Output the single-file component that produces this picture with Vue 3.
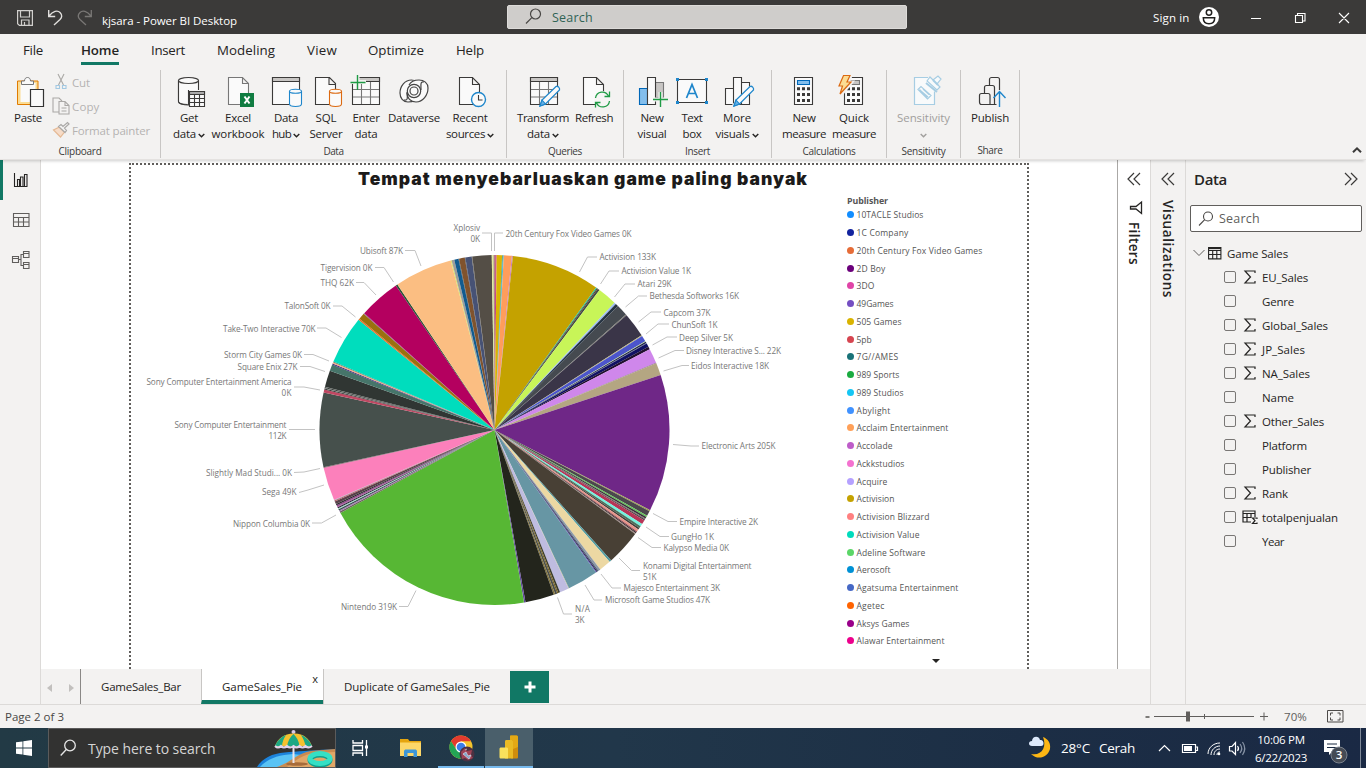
<script setup>
const SEGOE = "'Open Sans'"

// Tightens or loosens tracking so a label occupies the given length.
function fit(el, { value, modifiers }) {
  if (!value) return
  el.style.letterSpacing = '0px'
  const range = document.createRange()
  range.selectNodeContents(el)
  const box = range.getBoundingClientRect()
  const natural = modifiers.tall ? box.height : box.width
  const n = el.textContent.trim().length
  el.style.letterSpacing = (value - natural) / n + 'px'
}
const vFit = { mounted: fit, updated: fit }

const menus = [
  { t: 'File', x: 23, w: 20 },
  { t: 'Home', x: 81, w: 38, on: true },
  { t: 'Insert', x: 151, w: 34 },
  { t: 'Modeling', x: 217, w: 58 },
  { t: 'View', x: 307, w: 30 },
  { t: 'Optimize', x: 368, w: 56 },
  { t: 'Help', x: 456, w: 28 },
].map((m, i, a) => ({ ...m, gap: i ? m.x - a[i - 1].x - a[i - 1].w : m.x }))

const groups = [
  { name: 'Data', nw: 20, w: 346, pad: 4, items: [
    { i: 'db', w: 48, l: ['Get', 18, 'data', 23], c: 1 },
    { i: 'excel', w: 50, l: ['Excel', 26, 'workbook', 53] },
    { i: 'hub', w: 46, l: ['Data', 24, 'hub', 19], c: 1 },
    { i: 'sql', w: 34, l: ['SQL', 21, 'Server', 33] },
    { i: 'enter', w: 46, l: ['Enter', 27, 'data', 23] },
    { i: 'dv', w: 50, l: ['Dataverse', 52] },
    { i: 'recent', w: 62, l: ['Recent', 35, 'sources', 39], c: 1 },
  ] },
  { name: 'Queries', nw: 34, w: 117, pad: 5, items: [
    { i: 'transform', w: 62, l: ['Transform', 52, 'data', 23], c: 1 },
    { i: 'refresh', w: 40, l: ['Refresh', 38] },
  ] },
  { name: 'Insert', nw: 25, w: 148, pad: 6, items: [
    { i: 'visual', w: 44, l: ['New', 23, 'visual', 29] },
    { i: 'text', w: 36, l: ['Text', 21, 'box', 19] },
    { i: 'more', w: 54, l: ['More', 28, 'visuals', 34], c: 1 },
  ] },
  { name: 'Calculations', nw: 53, w: 115, pad: 7, items: [
    { i: 'calc', w: 50, l: ['New', 23, 'measure', 44] },
    { i: 'quick', w: 50, l: ['Quick', 30, 'measure', 44] },
  ] },
  { name: 'Sensitivity', nw: 44, w: 74, pad: 0, items: [
    { i: 'sens', w: 73, l: ['Sensitivity', 53], c: 2, off: true },
  ] },
  { name: 'Share', nw: 25, w: 59, pad: 0, items: [
    { i: 'publish', w: 58, l: ['Publish', 38] },
  ] },
]

const legend = [
  ['10TACLE Studios', '#118dff', 67], ['1C Company', '#12239e', 52], ['20th Century Fox Video Games', '#e66c37', 126],
  ['2D Boy', '#6b007b', 29], ['3DO', '#e044a7', 18], ['49Games', '#744ec2', 37], ['505 Games', '#d9b300', 45],
  ['5pb', '#d64550', 15], ['7G//AMES', '#197278', 42], ['989 Sports', '#1aab40', 43], ['989 Studios', '#15c6f4', 47],
  ['Abylight', '#4092ff', 34], ['Acclaim Entertainment', '#ffa058', 92], ['Accolade', '#be5dc9', 36],
  ['Ackkstudios', '#f472d0', 48], ['Acquire', '#b5a1ff', 31], ['Activision', '#c4a200', 38],
  ['Activision Blizzard', '#ff8080', 73], ['Activision Value', '#00dbbc', 63], ['Adeline Software', '#5bd667', 69],
  ['Aerosoft', '#0091d5', 34], ['Agatsuma Entertainment', '#4668c5', 102], ['Agetec', '#ff6300', 28],
  ['Aksys Games', '#99008a', 53], ['Alawar Entertainment', '#ec008c', 88],
]

const CX = 494.5, CY = 430, R = 175
// [end angle clockwise from 12 o'clock, colour]
const stops = [
  [0.25, '#8a5a34'], [0.7, '#c23f86'], [2.5, '#dab400'], [2.75, '#4c8c58'], [3.05, '#35b8e0'], [5.7, '#ff9d5b'], [6.05, '#c67cb8'],
  [35.5, '#c4a200'], [35.85, '#20c38f'], [36.2, '#57362b'], [36.9, '#434a45'], [43.3, '#c8f558'], [43.9, '#9dbcf0'], [44.9, '#273443'],
  [48.7, '#454a50'], [49, '#77756d'], [57.2, '#3a3548'], [57.5, '#bdb875'], [59.5, '#4c55cb'], [59.75, '#c1ec83'],
  [60.2, '#20204e'], [60.4, '#5a6a81'], [61.6, '#101063'], [62.5, '#21102f'], [67.4, '#cf87eb'], [67.6, '#7a5c78'], [71.7, '#b4a682'],
  [117.25, '#6f2787'], [117.65, '#9ba34e'], [119.3, '#4c474d'], [119.8, '#60c755'], [120.4, '#39333a'], [120.7, '#756964'], [121.1, '#514147'],
  [122.5, '#b63557'], [123.4, '#72f3df'], [124.1, '#4d705b'], [124.7, '#403e39'], [125.5, '#e7958a'], [125.8, '#7a3040'],
  [126.2, '#3c3032'], [126.5, '#9b837e'], [138.2, '#484035'], [138.9, '#529ca1'], [142.8, '#ecd8a3'], [143.5, '#8d99a5'],
  [144, '#53617e'], [144.3, '#18132f'], [144.55, '#503ab5'], [154.8, '#6796a4'], [155, '#a9b48c'], [158, '#bfbce0'],
  [158.6, '#3b3d30'], [159, '#796018'], [159.7, '#4c4f49'], [160.2, '#82733a'], [169.8, '#23251c'], [170.3, '#61489b'],
  [241.7, '#57b734'], [242.2, '#6b6458'], [242.6, '#a579b5'], [243.1, '#394e4b'], [243.4, '#a3d9ca'], [243.8, '#20202e'],
  [244.1, '#a45e96'], [244.5, '#8f3e87'], [245, '#2d292f'], [245.9, '#574149'], [246.2, '#b85c67'], [246.45, '#86a7b4'],
  [257.5, '#fc80bb'], [257.7, '#97596f'], [282.4, '#46504c'], [283.4, '#bf4862'], [283.7, '#303534'], [283.9, '#8b8d87'],
  [284.2, '#303633'], [284.35, '#778076'], [289.8, '#303633'], [292, '#46756a'], [292.35, '#3f2382'], [292.8, '#efaf82'], [293, '#477d69'],
  [309, '#00ddbd'], [309.5, '#f06a20'], [311.6, '#9b700e'], [311.9, '#80568e'], [325.7, '#b4005f'], [326.3, '#295237'],
  [345.5, '#fbbe82'], [345.8, '#dbe35c'], [346.7, '#9d9d9a'], [348.1, '#115b8f'], [348.3, '#304c5a'], [350.2, '#80532d'], [350.4, '#424857'], [352.5, '#475275'],
  [352.7, '#625e54'], [359.1, '#544e46'], [359.45, '#e3ea91'], [359.75, '#bfd790'], [360, '#ad556f'],
]
const pt = (a, r = R) => {
  const t = (a * Math.PI) / 180
  return `${(CX + r * Math.sin(t)).toFixed(2)} ${(CY - r * Math.cos(t)).toFixed(2)}`
}
const slices = stops.map(([end, fill], i) => {
  const start = i ? stops[i - 1][0] : 0
  return { fill, d: `M${CX} ${CY}L${pt(start)}A${R} ${R} 0 0 1 ${pt(end)}Z` }
})

// text, left x, vertical centre, width
const labels = [
  ['Xplosiv', 453.5, 228, 26.5], ['0K', 470.5, 239, 9.5], ['20th Century Fox Video Games 0K', 505.5, 234, 126],
  ['Activision 133K', 599.5, 257, 56.5], ['Activision Value 1K', 621.5, 271, 69.5], ['Atari 29K', 637.5, 284, 34],
  ['Bethesda Softworks 16K', 649.5, 296, 89.5], ['Capcom 37K', 663.5, 313, 47], ['ChunSoft 1K', 671.5, 325, 46],
  ['Deep Silver 5K', 679, 338, 54], ['Disney Interactive S... 22K', 686, 351, 95], ['Eidos Interactive 18K', 691, 366, 78],
  ['Electronic Arts 205K', 701.5, 446, 74], ['Empire Interactive 2K', 679.5, 522, 78.5], ['GungHo 1K', 671, 537, 43],
  ['Kalypso Media 0K', 663.5, 548, 65.5], ['Konami Digital Entertainment', 643, 566, 108.5], ['51K', 643, 577, 13.5],
  ['Majesco Entertainment 3K', 623.5, 588, 96.5], ['Microsoft Game Studios 47K', 605, 600, 105], ['N/A', 575, 609, 15],
  ['3K', 575, 620, 9.5], ['Nintendo 319K', 341, 607, 56], ['Nippon Columbia 0K', 233, 524, 77], ['Sega 49K', 262, 492, 34.5],
  ['Slightly Mad Studi... 0K', 206, 473, 86], ['Sony Computer Entertainment', 174.5, 425, 112], ['112K', 268.5, 436, 18],
  ['Sony Computer Entertainment America', 146.5, 382, 145], ['0K', 281.5, 393, 10], ['Square Enix 27K', 237.5, 367, 60],
  ['Storm City Games 0K', 224, 355, 78], ['Take-Two Interactive 70K', 223, 329, 92.5], ['TalonSoft 0K', 284.5, 306, 46],
  ['THQ 62K', 320.5, 283, 33.5], ['Tigervision 0K', 320.5, 268, 52], ['Ubisoft 87K', 360, 251, 43],
]
const leaders = [
  '482,233 491.5,233 491.5,251', '503,233 494.5,233 494.5,251', '597,257 587.5,257 579.5,272', '619,271 609,271 600.5,284',
  '635,284 625,284 614.5,297', '647,296 638.5,296 625.5,307', '661,312 651,312 638.5,322', '669,324 658,324 646,334',
  '677,337 667,337 652.5,345', '684,350.5 675,350.5 658.5,358', '689,365.5 682,365.5 663.5,371', '699,446 691,446 673,444.5',
  '677,521.5 668,521.5 653,513.5', '669,536.5 660,536.5 646,527', '661,547.5 652,547.5 638,537.5', '640,570.5 631.5,570.5 619,558',
  '621,588 612,588 601,574', '602,600 594,600 585,585', '572,614 563.5,614 557.5,597.5', '399,606.5 408,606.5 416,590.5',
  '312,523 321.5,523 336,515', '299,492.5 308,490 324,485', '294,472.5 304,472 320,468.5', '289,429.5 299,429.5 315,429.5',
  '294,387 304,387 320,390', '300,366.5 310,366.5 325,371.5', '304,354.5 313,354.5 329,361', '317,328 326,328 341.5,337.5',
  '333,306 342,306 355.5,317', '356,282.5 364,282.5 376,295', '375,267.5 384,267.5 393.5,282', '405,250.5 415,250.5 421,266',
]

const fields = [
  ['EU_Sales', 46, 's'], ['Genre', 32], ['Global_Sales', 66, 's'], ['JP_Sales', 43, 's'], ['NA_Sales', 48, 's'], ['Name', 32],
  ['Other_Sales', 62, 's'], ['Platform', 45], ['Publisher', 49], ['Rank', 26, 's'], ['totalpenjualan', 76, 't'], ['Year', 22],
]
</script>

<template>
  <div class="app">
    <header class="titlebar">
      <svg class="tb-icons" width="102" height="34" fill="none" stroke="#d2d0ce" stroke-width="1.2">
        <path d="M17.6 10.6h14.8v14.8H19.4l-1.8-1.6zM20.5 11v6h9v-6M21.5 25v-5h7.500v5M24.500 22v3" />
        <path stroke="#e1dfdd" stroke-width="1.4" d="M48.700 10v6.500h6.500M49 16c4-5 8.500-6 11-3.500s2 5-0 7L54 25" />
        <path stroke="#797775" stroke-width="1.3" d="M91.300 10v6.500h-6.500M91 16c-4-5-8.500-6-11-3.500s-2 5 0 7L86 25" />
      </svg>
      <span class="doc" v-fit="135">kjsara - Power BI Desktop</span>
      <div class="topsearch">
        <svg width="18" height="18" fill="none" stroke="#484644" stroke-width="1.2"><circle cx="11.500" cy="6" r="5" /><path d="M7.800 9.700L2 15.500" /></svg>
        <span v-fit="41">Search</span>
      </div>
      <div class="account">
        <span v-fit="36.500">Sign in</span>
        <svg width="20" height="20"><circle cx="10" cy="10" r="10" fill="#fff" /><g fill="none" stroke="#201f1e" stroke-width="1.500"><circle cx="10" cy="5.500" r="2.700" /><path d="M4.300 10.700h11.400c0 3.800-2 6-5.700 6s-5.700-2.200-5.700-6z" /></g></svg>
      </div>
      <svg class="winbtns" width="130" height="34" fill="none" stroke="#fff" stroke-width="1.100">
        <path d="M15 18.500h10M59.500 15.500h7v7h-7zM61.500 15.500v-2h7.500v7.500h-2.500M103 13l10 10M113 13l-10 10" />
      </svg>
    </header>

    <nav class="menu">
      <div v-for="m in menus" :key="m.t" class="menu-item" :class="{ on: m.on }" :style="{ width: m.w + 'px', marginLeft: m.gap + 'px' }">
        <span v-fit="m.w">{{ m.t }}</span>
      </div>
    </nav>

    <section class="ribbon">
      <div class="group clip">
        <div class="group-body">
          <div class="btn paste">
            <svg class="ico" width="40" height="36" fill="none">
              <path d="M9.500 9H30v23.500H9.500z" fill="#fbdc93" stroke="#e07b00" /><path d="M12.500 11h15v19h-15z" fill="#fafafa" />
              <path d="M13.500 12.500V9h3c0-2 1-3.500 3-3.500s3 1.500 3 3.500h3v3.500z" fill="#fafafa" stroke="#777" />
              <path d="M22.500 17.500h13v17h-13z" fill="#fafafa" stroke="#333" stroke-width="1.200" />
            </svg>
            <span v-fit="28">Paste</span>
          </div>
          <ul class="clip-list">
            <li><svg width="18" height="18" fill="none" stroke="#aaa8a6" stroke-width="1.100"><path d="M6 1l5.500 11M12 1L6.500 12" /><path stroke="#a3c9e2" d="M4 12.500h3.500v3H4zM10.500 12.500H14v3h-3.500z" /></svg><span v-fit="18">Cut</span></li>
            <li><svg width="18" height="18" fill="none" stroke="#aaa8a6" stroke-width="1.100"><path d="M7 15H1V1h6l3 3M7 4.500h6l4 4V17H7zM13 4.500v4h4M9.500 11h5M9.500 14h5" /></svg><span v-fit="27.500">Copy</span></li>
            <li><svg width="18" height="18" fill="none" stroke="#aaa8a6" stroke-width="1.200"><path stroke="#e5b994" fill="#f6dcc8" d="M7.500 6L1.500 9 8.500 16l4-5z" /><path fill="#f3f2f1" d="M6.500 5.500l6.500 6 1.500-2-2-2.500L17 3l-1.500-1.500-4.500 4-2-2z" /></svg><span v-fit="78">Format painter</span></li>
          </ul>
        </div>
        <div class="group-name"><span v-fit="43">Clipboard</span></div>
      </div>

      <div v-for="g in groups" :key="g.name" class="group" :style="{ width: g.w + 'px' }">
        <div class="group-body" :style="{ paddingLeft: g.pad + 'px' }">
          <div v-for="b in g.items" :key="b.i" class="btn" :class="{ off: b.off }" :style="{ width: b.w + 'px' }">
            <svg class="ico" width="40" height="36" fill="none" stroke="#3b3a39" stroke-width="1.100">
              <template v-if="b.i === 'db'">
                <path fill="#fafafa" d="M9.500 8.500v21c0 2 4.500 3.500 10 3.500V12" /><path fill="#fafafa" stroke="none" d="M10 9h19v9H18v15l-8-3z" />
                <path d="M29.500 18V8.500M9.500 8.500v21c0 1.500 3 3 9 3" /><ellipse cx="19.500" cy="8.500" rx="10" ry="3" fill="#fafafa" />
                <path fill="#fafafa" d="M20.500 19.500h15v15h-15z" /><path fill="#aaa" d="M20.500 19.500h15v3h-15z" /><path d="M20.500 26.500h15M20.500 30.500h15M25.500 22.500v12M30.500 22.500v12" />
              </template>
              <template v-else-if="b.i === 'excel'">
                <path stroke="#777" fill="#fafafa" d="M10.500 5.500h14l6 6v21h-20zM24.500 5.500v6h6" /><path stroke="none" fill="#107c41" d="M22 21h14v14H22z" />
                <path stroke="#fff" stroke-width="2" d="M26.500 24.500l5 7M31.500 24.500l-5 7" />
              </template>
              <template v-else-if="b.i === 'hub'">
                <path fill="#fafafa" d="M6.500 5.500h27v27h-27z" /><path fill="#c8c6c4" d="M6.500 5.500h27v4h-27z" />
                <path stroke="#fafafa" stroke-width="4" d="M23 20v12" /><path stroke="#1e86cb" fill="#fafafa" d="M23.500 19v13c0 1.500 3 2.500 6 2.500s6-1 6-2.500V19" /><ellipse cx="29.500" cy="19.300" rx="6" ry="2" fill="#fafafa" stroke="#1e86cb" />
              </template>
              <template v-else-if="b.i === 'sql'">
                <path fill="#fafafa" d="M9.500 5.500h14l6 6v21h-20zM23 5.500v7h7" /><path stroke="#dc6a12" fill="#fafafa" d="M23.500 19v13c0 1.500 3 2.500 6 2.500s6-1 6-2.500V19" /><ellipse cx="29.500" cy="19.300" rx="6" ry="2" fill="#fafafa" stroke="#dc6a12" />
              </template>
              <template v-else-if="b.i === 'enter'">
                <path fill="#fafafa" d="M6.500 10v22.500h27v-27H12" /><path fill="#c8c6c4" d="M12 5.500h21.500v4H12z" /><path stroke="#777" d="M7 17.500h26M7 25h26M15.500 10v22M24.500 10v22" />
                <path stroke="#f3f2f1" stroke-width="4" d="M11.500 3v14M4 10h16" /><path stroke="#1f9b45" stroke-width="1.400" d="M11.500 3v15M4.500 10.500h15" />
              </template>
              <template v-else-if="b.i === 'dv'">
                <g stroke="#444" stroke-width="1.200">
                  <path fill="#fafafa" d="M25 24c-2 4-6 6-11 6-5 0-8-4-8-9C6 14 11 8 17.500 8c6 0 9.500 4 9.500 9" />
                  <path fill="#fafafa" d="M15 13c2-4 5-5 10-5 5 0 9 3 9 8 0 7-5 14-12 14-5.500 0-9-4-9-9" />
                  <circle cx="20" cy="19" r="6.700" fill="#fafafa" /><circle cx="20" cy="19" r="4" />
                  <path d="M10 28c5 1 3-4 3-8M30 10c-4-1-3 3-3 8" />
                </g>
              </template>
              <template v-else-if="b.i === 'recent'">
                <path fill="#fafafa" d="M9.500 5.500h13l7 7v20h-20zM22.500 5.500v7h7" /><circle cx="28.500" cy="27.500" r="7" fill="#fafafa" stroke="#1e86cb" stroke-width="1.400" /><path d="M28.500 23v5h4" />
              </template>
              <template v-else-if="b.i === 'transform'">
                <path fill="#fafafa" d="M7.500 5.500h27v27h-27z" /><path fill="#c8c6c4" d="M7.500 5.500h27v4h-27z" /><path stroke="#777" d="M8 17.500h26M8 25h26M16.500 10v22M25.500 10v22" />
                <path fill="#fafafa" stroke="#1e86cb" stroke-width="1.300" d="M17 34l2-6L33 14.500c2-1 4 1.500 3.500 3.500L22.500 32z" /><path fill="#66afe3" stroke="#1e86cb" d="M17 34l2-6 3.500 4z" />
              </template>
              <template v-else-if="b.i === 'refresh'">
                <path fill="#fafafa" d="M9.500 5.500h13l7 7v20h-20zM22.500 5.500v7h7" /><circle cx="28.500" cy="27.500" r="8.500" fill="#f6f5f4" stroke="none" />
                <path stroke="#1f9b45" stroke-width="1.300" d="M21.500 26c1-7 10-8 13-2M35.500 19.500V24.500h-5M35.500 29c-1 7-10 8-13 2M21.500 35.500v-5h5" />
              </template>
              <template v-else-if="b.i === 'visual'">
                <path fill="#83beec" stroke="#0067b8" d="M7.500 16.500h8v16h-8z" /><path fill="#c8c6c4" stroke="#777" d="M23.500 10.500h8v15h-8z" /><path fill="#fafafa" d="M15.500 5.500h8v27h-8z" />
                <path stroke="#f3f2f1" stroke-width="4" d="M28.500 20v14M21 27.500h15" /><path stroke="#1f9b45" stroke-width="1.400" d="M28.500 20v15M21 27.500h15" />
              </template>
              <template v-else-if="b.i === 'text'">
                <path fill="#fafafa" d="M5.500 7.500h29v23h-29z" /><path stroke="none" fill="#1e86cb" d="M4 6h3v3H4zM33 6h3v3h-3zM4 29h3v3H4zM33 29h3v3h-3z" /><path stroke="#1e86cb" stroke-width="1.700" d="M14.500 26L20 12.500 25.500 26M16.500 21.500h7" />
              </template>
              <template v-else-if="b.i === 'more'">
                <path fill="#fafafa" d="M8.500 16.500h8v16h-8zM24.500 10.500h8v22h-8zM16.500 5.500h8v27h-8z" /><path stroke="#f3f2f1" stroke-width="3" d="M16 34L36 13" />
                <path fill="#fafafa" stroke="#1e86cb" stroke-width="1.300" d="M17 34l2-6L33 14.500c2-1 4 1.500 3.500 3.500L22.500 32z" /><path fill="#66afe3" stroke="#1e86cb" d="M17 34l2-6 3.500 4z" />
              </template>
              <template v-else-if="b.i === 'calc'">
                <path fill="#fafafa" d="M10.500 5.500h18v27h-18z" /><path fill="#83beec" stroke="#0067b8" d="M13.500 8.500h12v4h-12z" /><path stroke-width="3" stroke-dasharray="3 2" d="M13 16.800h13M13 22.600h13M13 28.400h13" />
              </template>
              <template v-else-if="b.i === 'quick'">
                <path fill="#fafafa" d="M10.500 5.500h18v27h-18z" /><path fill="#c8c6c4" stroke="#777" d="M15 8.500h10.500v4H14z" /><path stroke-width="3" stroke-dasharray="3 2" d="M13 16.800h13M13 22.600h13M13 28.400h13" />
                <path stroke="#f3f2f1" stroke-width="3" fill="#f3f2f1" d="M9 4h8l-3 6h4L7 23l2-8H5z" /><path stroke="#dc6a12" fill="#fbdc93" stroke-width="1.200" d="M9.500 3.500H16L13 10h4L6 22l2.500-8H5z" />
              </template>
              <template v-else-if="b.i === 'sens'">
                <g stroke="#a6cde3" stroke-width="1.200"><path fill="#f8fafb" d="M24 5.500H10.500v27h20v-13" /><path fill="#f8fafb" d="M14 17.500l3-3 10 9-3.500 3.500z M17 19l7 6M19 17l6 5.500M15.500 17.500l8 8" /><path fill="#f8fafb" d="M23 9l3-4 3 3 5-4 3 3-4 5 3 3-3 3z" /><path stroke-width="2" d="M22 11l11 9M29 8l5 5" /></g>
              </template>
              <template v-else>
                <path stroke-width="1.200" d="M9.500 30v-6.500c0-1 1-2 2-2h6.500c1 0 2 1 2 2v9h-8.500c-1 0-2-1-2-2.500zM14.500 21.500v-6c0-1 1-2 2-2h6c1 0 2 1 2 2v17H20M19.500 13.500v-6c0-1 1-2 2-2h6c1 0 2 1 2 2V18M24.500 32.500h2" />
                <path stroke="#1e86cb" stroke-width="1.400" d="M29.500 35V20M23.500 26l6-6.500 6 6.500" />
              </template>
            </svg>
            <span v-fit="b.l[1]">{{ b.l[0] }}</span>
            <span v-if="b.l[2]" class="row2"><i v-fit="b.l[3]">{{ b.l[2] }}</i><svg v-if="b.c" width="7" height="5" fill="none" stroke="currentColor" stroke-width="1.400"><path d="M.7.900L3.500 3.700 6.300.900" /></svg></span>
            <span v-else-if="b.c" class="row2"><svg width="7" height="5" fill="none" stroke="currentColor" stroke-width="1.400"><path d="M.7.900L3.500 3.700 6.300.900" /></svg></span>
          </div>
        </div>
        <div class="group-name"><span v-fit="g.nw">{{ g.name }}</span></div>
      </div>
      <svg class="collapse" width="10" height="6" fill="none" stroke="#3b3a39" stroke-width="2"><path d="M1 5.300l4-4 4 4" /></svg>
    </section>

    <main class="work">
      <aside class="rail">
        <div class="rail-item on"><svg width="20" height="20" fill="none" stroke="#252423" stroke-width="1.100"><path d="M3.500 3v13.500h13M6.500 16V9.500h2V16M9.500 16V7h2.500v9M13.500 16V4.500H16V16" /></svg></div>
        <div class="rail-item"><svg width="20" height="20" fill="none" stroke="#605e5c" stroke-width="1.100"><path d="M2.500 3.500h15.500v13H2.500zM2.500 7.500H18M2.500 12H18M7.500 7.500v9M12.500 7.500v9" /></svg></div>
        <div class="rail-item"><svg width="20" height="20" fill="none" stroke="#605e5c" stroke-width="1.100"><path d="M1.500 6.500h6v6h-6zM1.500 8.500h6M12.500 1.500H18v6h-5.500zM12.500 3.500H18M12.500 12.500H18v6h-5.500zM12.500 14.500H18M7.500 9.500H10M12.500 4.500H10v11h2.500" /></svg></div>
      </aside>

      <div class="center">
        <div class="stage">
          <div class="canvas">
            <div class="page">
              <h1 v-fit="450">Tempat menyebarluaskan game paling banyak</h1>
              <div class="visual">
                <svg class="pie" width="700" height="478" viewBox="132 191 700 478">
                  <path v-for="(s, i) in slices" :key="i" :d="s.d" :fill="s.fill" />
                  <polyline v-for="(l, i) in leaders" :key="'l' + i" :points="l" fill="none" stroke="#c3c3c3" />
                  <text v-for="(l, i) in labels" :key="'t' + i" :x="l[1]" :y="l[2] + 3.300" :textLength="l[3]" fill="#777" font-size="8.200" :font-family="SEGOE">{{ l[0] }}</text>
                </svg>
                <div class="legend">
                  <b v-fit="41">Publisher</b>
                  <ul>
                    <li v-for="l in legend" :key="l[0]"><i :style="{ background: l[1] }"></i><span v-fit="l[2]">{{ l[0] }}</span></li>
                  </ul>
                  <svg class="more" width="8" height="4"><path d="M0 0h8L4 4z" fill="#252423" /></svg>
                </div>
              </div>
            </div>
          </div>
          <aside class="filters">
            <svg width="14" height="14" fill="none" stroke="#3b3a39" stroke-width="1.200"><path d="M7 1L1 7l6 6M13 1L7 7l6 6" /></svg>
            <svg class="funnel" width="14" height="14" fill="none" stroke="#252423" stroke-width="1.300"><path d="M12.500 1v11.500L7 8H1.500V5.500H7z" /></svg>
            <span class="vert" v-fit.tall="43">Filters</span>
          </aside>
        </div>
        <div class="tabs">
          <div class="arrows"><svg width="5" height="8"><path d="M5 0v8L0 4z" fill="#c2c0be" /></svg><svg width="5" height="8"><path d="M0 0v8l5-4z" fill="#c2c0be" /></svg></div>
          <div class="tab t1"><span v-fit="80">GameSales_Bar</span></div>
          <div class="tab t2"><span v-fit="80">GameSales_Pie</span><em>x</em></div>
          <div class="tab t3"><span v-fit="146">Duplicate of GameSales_Pie</span></div>
          <div class="add"><svg width="12" height="12"><path d="M6 .500v11M.500 6h11" stroke="#fff" stroke-width="3" /></svg></div>
        </div>
      </div>

      <aside class="vis">
        <svg width="14" height="14" fill="none" stroke="#3b3a39" stroke-width="1.200"><path d="M7 1L1 7l6 6M13 1L7 7l6 6" /></svg>
        <span class="vert" v-fit.tall="98">Visualizations</span>
      </aside>

      <aside class="data">
        <div class="data-head"><strong v-fit="33">Data</strong><svg width="14" height="14" fill="none" stroke="#3b3a39" stroke-width="1.200"><path d="M1 1l6 6-6 6M7 1l6 6-6 6" /></svg></div>
        <div class="data-search"><svg width="16" height="16" fill="none" stroke="#484644" stroke-width="1.100"><circle cx="10" cy="5.500" r="4.500" /><path d="M6.700 8.700L1 14.500" /></svg><span v-fit="41">Search</span></div>
        <div class="tree">
          <div class="table-row">
            <svg width="12" height="8" fill="none" stroke="#605e5c"><path d="M.5 1L6 6.500 11.500 1" /></svg>
            <svg width="14" height="13" fill="none" stroke="#252423" stroke-width="1.100"><path d="M.6.600h12.300v11.300H.6zM.6 3.500h12.300M.6 7.500h12.300M4.700 3v9M8.800 3v9" /><path d="M.6 1.300h12.300" stroke-width="1.600" /></svg>
            <span v-fit="61">Game Sales</span>
          </div>
          <div v-for="f in fields" :key="f[0]" class="field">
            <i class="check"></i>
            <svg width="16" height="14" fill="none" stroke="#252423" stroke-width="1.200">
              <path v-if="f[2] === 's'" d="M13 3V1H3l5.500 6L3 13h10v-2" />
              <template v-if="f[2] === 't'"><path d="M9 12H1V1h12v6M1 3.500h12M5 3.500V12M1 7.500h8M9 3.500V8" /><path d="M15 9V8h-4.500l2.500 2.700-2.500 2.800H15v-1" /></template>
            </svg>
            <span v-fit="f[1]">{{ f[0] }}</span>
          </div>
        </div>
      </aside>
    </main>

    <footer class="status">
      <span v-fit="59">Page 2 of 3</span>
      <svg width="200" height="22" fill="none" stroke="#605e5c"><path d="M.500 11h4" stroke-width="1.600" /><path d="M9 10.500h100M59.500 8v5M115 10.500h8M119 6.500v8" /><path d="M43 5.500v10" stroke-width="4" /></svg>
      <span class="pct" v-fit="23">70%</span>
      <svg class="fitpage" width="17" height="13" fill="none" stroke="#4c4a48"><path d="M.5.500h15.500v11.500H.5z" /><path d="M6 3H3.500v2.500M10.500 3H13v2.500M3.500 7.500V10H6M13 7.500V10h-2.500" /></svg>
    </footer>

    <div class="taskbar">
      <div class="start"><svg width="16" height="16" fill="#fff"><path d="M0 2.300L6.500 1.400v6.200H0zM7.300 1.300L16 0v7.600H7.300zM0 8.400h6.500v6.200L0 13.700zM7.300 8.400H16V16l-8.700-1.300z" /></svg></div>
      <div class="tsearch">
        <svg width="17" height="18" fill="none" stroke="#e6e6e6" stroke-width="1.300"><circle cx="10" cy="6.500" r="5.300" /><path d="M6.300 10.500L.7 16.500" /></svg>
        <span v-fit="127.500">Type here to search</span>
        <svg class="beach" width="78" height="38">
          <path d="M0 38C7 27 18 24 32 23S60 21 78 20v18z" fill="#1c83db" /><path d="M3 38c8-9 19-12 33-13l9 1-12 12z" fill="#5ac3f4" />
          <path d="M20 38c15-5 18-13 34-16l24-2v18z" fill="#c98b50" /><path d="M30 38c8-5 12-11 26-14l22-1v15z" fill="#e0a768" />
          <ellipse cx="40" cy="35" rx="11" ry="1.800" fill="#a76c3b" />
          <path d="M36.500 5v29" stroke="#e9e4ed" stroke-width="2" /><circle cx="36.500" cy="3" r="2" fill="#d9c9e6" />
          <path d="M18 17C21 9 27 5 36.500 4.500S52 9 55 17l-5 1-4-1-6 1-4-1-6 1-4-1-5 1z" fill="#f5c12e" />
          <path d="M18 17C20 12 24 8 29 6c-2 3-4 7-4 11.500zM30 17c1-5 3-9 6.500-12 3 3 5.500 7 6 12l-6 .5zM55 17C53 12 49 8 44 6c2 3 4 7 4.500 11.500z" fill="#1da884" />
          <path d="M18 17q3 3 6 0 3 3 6 0 3 3 6.500 0 3 3 6 0 3 3 6 0 3 3 6.500 0" stroke="#e2d4ed" stroke-width="2" fill="none" />
          <ellipse cx="63" cy="31" rx="10" ry="5" fill="none" stroke="#109f8d" stroke-width="5" /><ellipse cx="63" cy="29.500" rx="10" ry="5" fill="none" stroke="#35e0c4" stroke-width="5" />
        </svg>
      </div>
      <div class="titem"><svg width="18" height="18" fill="none" stroke="#fff" stroke-width="1.300"><path d="M2 1v3h9.500V1M2 17v-3h9.500v3M2 6.500h9.500v5H2zM15.500 1v16" /><path d="M14 6.500h3v3h-3z" fill="#fff" stroke="none" /></svg></div>
      <div class="titem w54"><svg width="23" height="20"><path d="M1 1h8l1.500 2H22v15H1z" fill="#e5a50f" /><path d="M1 4.500h21V18H1z" fill="#fcd769" /><path d="M5 19v-5.500c0-1.500 1-2 2-2h9c1 0 2 .5 2 2V19h-3.500v-4h-6v4z" fill="#3d96d8" /></svg></div>
      <div class="titem run">
        <svg width="25" height="25" viewBox="0 0 25 25"><circle cx="12" cy="12" r="11.500" fill="#f4c42d" /><path d="M2 6.200A11.500 11.500 0 0 1 22 6.300H12L7 14z" fill="#e33b2e" /><path d="M2 6.200A11.500 11.500 0 0 0 12 23.500l4.500-9L7 14z" fill="#23a455" /><circle cx="12" cy="12" r="5.500" fill="#fff" /><circle cx="12" cy="12" r="4.300" fill="#3b7de9" /><circle cx="18" cy="19" r="7.500" fill="#4b3142" /><path d="M12 17l4-4 2 3 5-1-1 5 2 3-5 2-3-2-3 1z" fill="#a04355" /><path d="M14 19l3-2 2 4 3-1-2 4zM16 15l2-1" fill="#82a6c9" stroke="#cfd0e2" stroke-width=".8" /></svg>
      </div>
      <div class="titem run active"><svg width="20" height="26"><path d="M12 1.500h5.500c1 0 1.500.5 1.500 1.500v20c0 1-.5 1.500-1.500 1.500H12z" fill="#cf8d0c" /><path d="M6 7.500c0-1 .5-1.500 1.500-1.500h5c1 0 1.500.5 1.500 1.500V24.500H6z" fill="#eabb24" /><path d="M11 1.500h6c1 0 2 .5 2 1.500v10l-5 2V7c0-.5-.5-1-1-1h-2z" fill="#e4a915" /><path d="M.5 15c0-1 .5-1.500 1.500-1.500h5.500c1 0 1.500.5 1.500 1.500v9.500H2c-1 0-1.500-.5-1.500-1.500z" fill="#fae15c" /></svg></div>
      <div class="tray">
        <svg width="24" height="24"><path d="M15 1c5 2 8 6 7 12-2 8-12 12-19 5 11 2 16-7 12-17z" fill="#fdb714" /><path d="M4 10C0 10 0 5 4 5c0-5 7-6 8-1 4-1 5 6 1 6z" fill="#dce9fb" /></svg>
        <span class="temp" v-fit="29">28°C</span><span class="wx" v-fit="36">Cerah</span>
        <svg class="sys" width="90" height="22" fill="none" stroke="#fff" stroke-width="1.200">
          <path d="M1 14l5.500-5.500L12 14" /><path d="M24.500 7.500h13v8h-13zM38 10h1.500v3.500H38" /><path fill="#fff" stroke="none" d="M26 9h8v5h-8z" />
          <path d="M50 17C50 11 55 6 62 6M53 18c0-5 4-9 9-9M56 18c0-3.500 2.500-6 6-6M59 18c0-2 1-3 3-3" stroke-width="1" /><circle cx="61" cy="17" r="1.300" fill="#fff" stroke="none" />
          <path d="M71.500 9.500h2.500l3.500-4v12L74 14h-2.500z" /><path d="M79.500 9q2 2.500 0 5" /><path d="M82 7q3.500 4.500 0 9M84.500 5q4.500 6.500 0 13" stroke="#8793a5" />
        </svg>
        <div class="clock"><span v-fit="47.500">10:06 PM</span><span v-fit="52">6/22/2023</span></div>
        <svg class="note" width="26" height="26"><path d="M1 2h16v12H9l-3 3v-3H1z" fill="#fff" /><path d="M4 6h10M4 9.500h10" stroke="#1a2a41" /><circle cx="16" cy="17" r="8" fill="#454b55" stroke="#7b828d" /><text x="16" y="21.300" text-anchor="middle" font-size="11.500" font-weight="600" fill="#fff" :font-family="SEGOE">3</text></svg>
        <i class="peek"></i>
      </div>
    </div>
  </div>
</template>

<style>
html, body { margin: 0; overflow: hidden; }
</style>

<style scoped>
* { box-sizing: border-box; }
.app { width: 1366px; height: 768px; display: flex; flex-direction: column; background: #f3f2f1; font-family: 'Open Sans', 'Noto Sans', sans-serif; font-size: 12px; color: #252423; overflow: hidden; white-space: nowrap; }
svg { display: block; flex: none; overflow: visible; }
ul { list-style: none; margin: 0; padding: 0; }
i, em { font-style: normal; }

.titlebar { height: 34px; flex: none; background: #3b3a39; display: flex; align-items: center; color: #fff; }
.doc { width: 405px; font-size: 11.500px; padding-top: 7px; }
.topsearch { width: 400px; height: 24px; background: #cfcdcb; border: 1px solid #dddbd9; border-radius: 2px; display: flex; align-items: center; color: #2f6355; font-size: 12.500px; padding-left: 16px; gap: 10px; }
.account { margin-left: 246px; display: flex; align-items: center; font-size: 11.500px; width: 83px; gap: 9px; }
.account span { width: 37px; }

.menu { height: 36px; flex: none; display: flex; font-size: 13.300px; }
.menu-item { height: 31px; line-height: 31px; padding-top: 1px; flex: none; }
.menu-item.on { font-weight: 600; border-bottom: 3px solid #117865; }

.ribbon { height: 90px; flex: none; display: flex; position: relative; border-bottom: 1px solid #e4e2e0; box-shadow: 0 3px 3px -2px rgba(0,0,0,.2); z-index: 1; }
.group { height: 88px; border-right: 1px solid #c8c6c4; display: flex; flex-direction: column; flex: none; }
.clip { width: 161px; }
.group-body { display: flex; height: 76px; padding-top: 2px; }
.btn { display: flex; flex-direction: column; align-items: center; flex: none; line-height: 16px; font-size: 11.500px; }
.btn .ico { margin-bottom: 2px; }
.btn.off { color: #a19f9d; }
.paste { width: 48px; padding-left: 8px; }
.row2 { display: flex; align-items: center; height: 16px; gap: 2px; }
.row2 svg { margin-top: 2px; }
.clip-list { color: #b5b3b1; font-size: 11.500px; margin: -2px 0 0 4px; }
.clip-list li { height: 24px; display: flex; align-items: center; gap: 2px; }
.group-name { font-size: 10px; text-align: center; line-height: 16px; padding-top: 1px; color: #3b3a39; }
.collapse { position: absolute; right: 4px; bottom: 6px; }

.work { height: 545px; flex: none; display: flex; border-bottom: 1px solid #dcdad8; }
.rail { width: 41px; border-right: 1px solid #dcdad8; flex: none; }
.rail-item { height: 40px; padding-left: 11px; display: flex; align-items: center; }
.rail-item.on { border-left: 3px solid #117865; padding-left: 8px; }
.center { width: 1110px; flex: none; display: flex; flex-direction: column; border-right: 1px solid #dcdad8; }
.stage { height: 509px; display: flex; background: #fff; }
.canvas { width: 1077px; padding: 3px 0 0 88px; border-right: 1px solid #aaa8a6; }
.page { width: 900px; height: 506px; border: 2px dotted #605e5c; border-bottom: 0; display: flex; flex-direction: column; overflow: hidden; }
.page h1 { margin: 0; padding-left: 227px; height: 26px; font: 900 17.500px/28px Inter, sans-serif; color: #1c1b1a; }
.visual { display: flex; }
.pie { margin-left: 1px; }
.legend { margin-left: 15px; width: 170px; padding-top: 4px; color: #555; font-size: 8.500px; }
.legend b { display: block; line-height: 13px; height: 12px; font-size: 8.800px; }
.legend ul { margin-top: -1px; }
.legend li { height: 17.750px; display: flex; align-items: center; gap: 2.500px; }
.legend li i { width: 7px; height: 7px; border-radius: 50%; }
.more { margin: 9px 0 0 85px; }
.filters { width: 32px; display: flex; flex-direction: column; align-items: center; padding-top: 12px; }
.funnel { margin: 15px 0 7px 3px; }
.vert { writing-mode: vertical-rl; font-weight: 600; font-size: 13.500px; }
.tabs { height: 35px; display: flex; }
.arrows { width: 39px; display: flex; align-items: center; gap: 17px; padding: 2px 0 0 6px; }
.tab { position: relative; border-left: 1px solid #c8c6c4; font-size: 11.500px; height: 35px; line-height: 36px; padding-left: 20px; }
.t1 { width: 121px; border-color: #8a8886; }
.t2 { width: 122px; background: #fff; border-bottom: 4px solid #117865; padding-left: 20px; }
.t2 em { position: absolute; right: 5px; top: -8px; font-size: 11px; }
.t3 { width: 187px; }
.add { width: 39px; height: 32px; margin-top: 2px; background: #117865; display: flex; align-items: center; justify-content: center; }
.vis { width: 35px; flex: none; border-right: 1px solid #dcdad8; display: flex; flex-direction: column; align-items: center; padding-top: 12px; gap: 14px; }
.data { width: 180px; padding: 0 4px; }
.data-head { height: 45px; display: flex; justify-content: space-between; align-items: center; padding: 0 4px 7px; font-size: 15px; }
.data-head strong { font-weight: 600; }
.data-search { width: 172px; height: 27px; border: 1px solid #605e5c; border-radius: 2px; background: #fff; display: flex; align-items: center; gap: 5px; padding-left: 7px; font-size: 12.500px; color: #605e5c; }
.tree { padding-top: 9px; font-size: 11.500px; }
.table-row { height: 24px; display: flex; align-items: center; padding-left: 3px; gap: 3px; }
.table-row span { margin-left: 2px; }
.field { height: 24px; display: flex; align-items: center; padding-left: 34px; }
.check { width: 12px; height: 12px; border: 1px solid #797775; border-radius: 2px; margin-right: 6px; }
.field span { margin-left: 4px; }

.status { height: 23px; flex: none; display: flex; align-items: center; color: #484644; font-size: 11.500px; padding-left: 5px; }
.status > span:first-child { width: 1140px; }
.status svg:nth-of-type(1) { width: 139px; }
.pct { width: 43px; color: #605e5c; }

.taskbar { height: 40px; flex: none; display: flex; background: linear-gradient(90deg, #223a45 0%, #21374a 45%, #1c2e45 75%, #1a2944 100%); color: #fff; }
.start { width: 48px; display: flex; align-items: center; justify-content: center; }
.tsearch { width: 288px; border: 1px solid #5b5b5b; background: #323231; display: flex; align-items: center; padding-left: 11px; font-size: 14px; gap: 11px; color: #d5d5d5; position: relative; }
.beach { position: absolute; right: 0; bottom: 0; overflow: hidden; }
.titem { width: 48px; display: flex; align-items: center; justify-content: center; }
.w54 { width: 54px; padding-right: 1px; }
.run { border-bottom: 2px solid #76b9ed; width: 46px; }
.run.active { background: #4a5f6b; width: 48px; margin-left: 1px; }
.tray { margin-left: auto; width: 338px; display: flex; align-items: center; }
.temp { margin-left: 9px; width: 38px; font-size: 13.500px; }
.wx { width: 59px; font-size: 13.500px; }
.clock { width: 66px; flex: none; font-size: 11.500px; display: flex; flex-direction: column; align-items: center; line-height: 18px; padding-top: 1px; }
.note { margin: 5px 0 0 9px; }
.peek { border-left: 1px solid #7f8998; height: 40px; margin-left: 11px; }
</style>
